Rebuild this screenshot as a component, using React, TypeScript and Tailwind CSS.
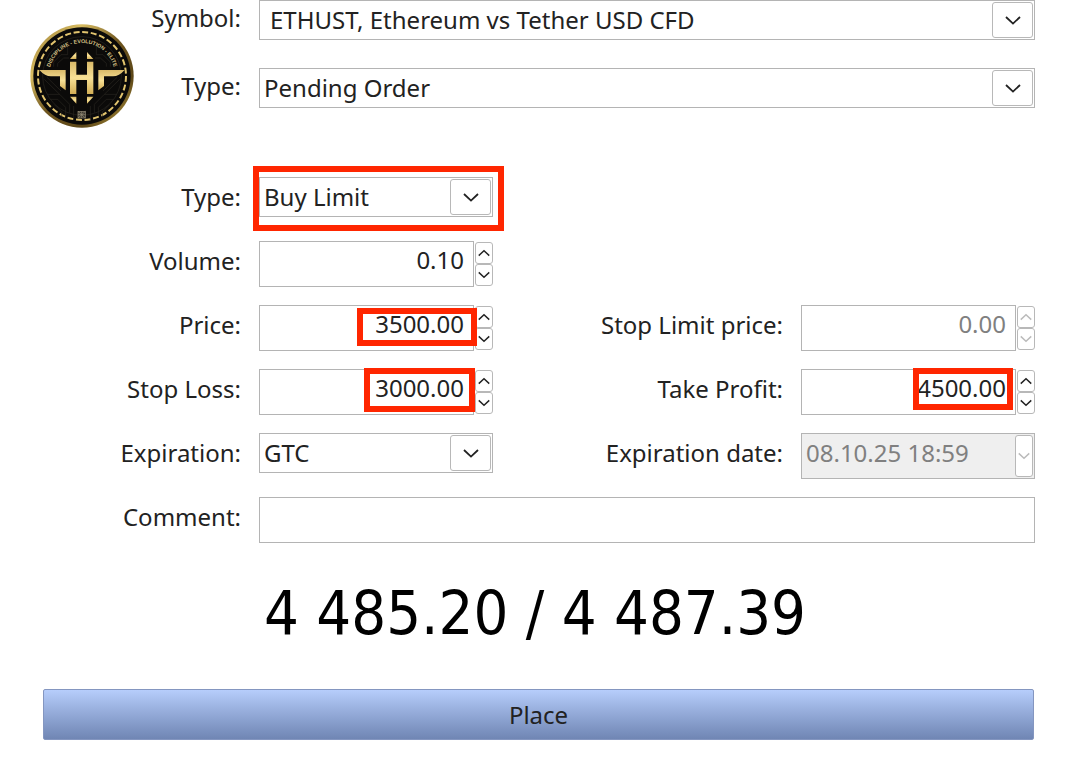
import type { ReactNode } from "react"
import { clsx } from "clsx"

function Chevron({ up, small, muted }: { up?: boolean; small?: boolean; muted?: boolean }) {
  return (
    <svg
      viewBox="0 0 16 9"
      className={clsx(small ? "w-3 h-2" : "w-4 h-[9px]", up && "rotate-180", muted ? "text-[#bbbbbb]" : "text-[#222222]")}
      fill="none"
      stroke="currentColor"
      strokeWidth={small ? 1.9 : 1.8}
      aria-hidden="true"
    >
      <path d="M1 1 L8 7.6 L15 1" />
    </svg>
  )
}

function Label({ htmlFor, compact, children }: { htmlFor: string; compact?: boolean; children: ReactNode }) {
  return (
    <label htmlFor={htmlFor} className={clsx("h-10 text-right whitespace-nowrap", compact ? "leading-9" : "leading-10")}>
      {children}
    </label>
  )
}

function SelectBox({ id, value, indent }: { id: string; value: string; indent?: boolean }) {
  return (
    <div className="relative h-10">
      <select
        id={id}
        defaultValue={value}
        className={clsx(
          "block w-full h-10 pr-12 border border-[#b4b4b4] bg-white appearance-none outline-none",
          indent ? "pl-2.5" : "pl-1",
        )}
      >
        <option>{value}</option>
      </select>
      <span className="absolute inset-y-0.5 right-0.5 w-[41px] flex items-center justify-center rounded-[3px] border border-[#b8b8b8] bg-white pointer-events-none">
        <Chevron />
      </span>
    </div>
  )
}

function SpinBox({ id, value, disabled, children }: { id: string; value: string; disabled?: boolean; children?: ReactNode }) {
  return (
    <div className="relative flex gap-px h-[46px]">
      <input
        id={id}
        type="text"
        inputMode="decimal"
        defaultValue={value}
        disabled={disabled}
        className="flex-1 min-w-0 pr-[9px] pb-2 text-right border border-[#b4b4b4] bg-white outline-none disabled:text-[#808080]"
      />
      <div className="flex flex-col w-[18px] py-px">
        <button
          type="button"
          aria-label="Increase"
          disabled={disabled}
          className="flex-1 flex items-center justify-center rounded-[3px] border border-[#b8b8b8]"
        >
          <Chevron up small muted={disabled} />
        </button>
        <button
          type="button"
          aria-label="Decrease"
          disabled={disabled}
          className="flex-1 flex items-center justify-center rounded-[3px] border border-[#b8b8b8]"
        >
          <Chevron small muted={disabled} />
        </button>
      </div>
      {children}
    </div>
  )
}

// red marker frame laid over a field
function Marker({ className }: { className: string }) {
  return <span className={clsx("absolute border-6 border-[#ff2600] pointer-events-none", className)} />
}

function Logo() {
  return (
    <svg viewBox="31 24 312 312" className="w-[104px] h-[104px] shrink-0" role="img" aria-label="Discipline Evolution Elite">
      <defs>
        <linearGradient id="rim" x1="0" y1="0" x2="1" y2="1">
          <stop offset="0" stopColor="#8d6f2c" />
          <stop offset="0.25" stopColor="#d9bd62" />
          <stop offset="0.5" stopColor="#6f5620" />
          <stop offset="0.75" stopColor="#5c4718" />
          <stop offset="1" stopColor="#c9a947" />
        </linearGradient>
        <linearGradient id="gold" x1="0" y1="0" x2="0" y2="1">
          <stop offset="0" stopColor="#d9b968" />
          <stop offset="0.5" stopColor="#f8e196" />
          <stop offset="1" stopColor="#d3ae55" />
        </linearGradient>
        <path id="motto" d="M88 180 A99 99 0 0 1 286 180" />
      </defs>
      <circle cx="187" cy="180" r="155" fill="url(#rim)" />
      <circle cx="187" cy="180" r="146" fill="#0b0a09" />
      <circle cx="187" cy="180" r="132" fill="none" stroke="#e2c46e" strokeWidth="6" strokeDasharray="18 7.9" />
      <g fill="none" stroke="#2b2721" strokeWidth="2">
        <circle cx="187" cy="180" r="118" />
        <path d="M84 235 H120 L150 265 V290 M92 250 H114 L138 274 V298 M104 266 L126 288 V304" />
        <path d="M290 235 H254 L224 265 V290 M282 250 H260 L236 274 V298 M270 266 L248 288 V304" />
        <path d="M102 152 V138 L124 116 H144 V90 M114 152 V142 L132 126 H148 M272 152 V138 L250 116 H230 V90 M260 152 V142 L242 126 H226" />
        <path d="M74 190 L120 235 M82 184 L124 225 M300 190 L254 235 M292 184 L250 225 M162 270 V312 M212 270 V312" />
      </g>
      <text fill="#d8c288" className="font-['Liberation_Sans_Narrow','Liberation_Sans',sans-serif] text-[16px] font-bold">
        <textPath href="#motto" startOffset="50%" textAnchor="middle">
          DISCIPLINE - EVOLUTION - ELITE
        </textPath>
      </text>
      <g fill="url(#gold)">
        <path d="M59 162 H138 V223 L121 210 V181 H94 Q76 181 59 162 Z" />
        <path d="M315 162 H236 V223 L253 210 V181 H280 Q298 181 315 162 Z" />
        <path d="M151 137 H170 V176 H202 V137 H221 V234 H202 V192 H170 V234 H151 Z" />
        <path d="M151 129 L170 108 V129 Z M221 129 L202 108 V129 Z" />
        <path d="M151 242 L170 263 V242 Z M221 242 L202 263 V242 Z" />
      </g>
      <g stroke="#948c78" strokeWidth="2" fill="none">
        <rect x="175" y="286" width="22" height="20" fill="#3b372e" />
        <path d="M175 296 H197 M186 286 V306 M175 286 L197 306 M197 286 L175 306" />
      </g>
    </svg>
  )
}

export default function App() {
  return (
    <form
      className="min-h-screen bg-white text-[#222222] font-['Noto_Sans',sans-serif] text-2xl leading-8"
      onSubmit={(e) => e.preventDefault()}
    >
      <div className="flex pl-[30px] pr-[35px]">
        <div className="pt-6">
          <Logo />
        </div>
        <div className="flex-1 grid grid-cols-[107px_1fr] gap-x-[18px] gap-y-7 content-start">
          <Label htmlFor="symbol" compact>
            Symbol:
          </Label>
          <SelectBox id="symbol" value="ETHUST, Ethereum vs Tether USD CFD" indent />
          <Label htmlFor="order-type" compact>
            Type:
          </Label>
          <SelectBox id="order-type" value="Pending Order" />
        </div>
      </div>

      <div className="grid grid-cols-[241px_234px_1fr_234px] auto-rows-[46px] gap-[18px] pt-[49px] pr-[35px]">
        <Label htmlFor="pending-type">Type:</Label>
        <div className="relative">
          <SelectBox id="pending-type" value="Buy Limit" />
          <Marker className="-left-1.5 -right-[11px] -top-[11px] h-[65px]" />
        </div>

        <div className="col-start-1 grid">
          <Label htmlFor="volume">Volume:</Label>
        </div>
        <SpinBox id="volume" value="0.10" />

        <div className="col-start-1 grid">
          <Label htmlFor="price">Price:</Label>
        </div>
        <SpinBox id="price" value="3500.00">
          <Marker className="right-4 top-[3px] w-[120px] h-[38px]" />
        </SpinBox>
        <Label htmlFor="stop-limit">Stop Limit price:</Label>
        <SpinBox id="stop-limit" value="0.00" disabled />

        <Label htmlFor="stop-loss">Stop Loss:</Label>
        <SpinBox id="stop-loss" value="3000.00">
          <Marker className="right-[18px] -top-px w-[111px] h-11" />
        </SpinBox>
        <Label htmlFor="take-profit">Take Profit:</Label>
        <SpinBox id="take-profit" value="4500.00">
          <Marker className="right-[22px] -top-px w-[100px] h-[42px]" />
        </SpinBox>

        <Label htmlFor="expiration">Expiration:</Label>
        <SelectBox id="expiration" value="GTC" />
        <Label htmlFor="expiration-date">Expiration date:</Label>
        <div className="relative">
          <input
            id="expiration-date"
            type="text"
            defaultValue="08.10.25 18:59"
            disabled
            className="block w-full h-[46px] pl-1 pb-2 border border-[#b4b4b4] bg-[#efefef] text-[#808080]"
          />
          <span className="absolute inset-y-0.5 right-0.5 w-[18px] flex items-center justify-center rounded-[3px] border border-[#b8b8b8] bg-white">
            <Chevron small muted />
          </span>
        </div>

        <Label htmlFor="comment">Comment:</Label>
        <input id="comment" type="text" className="col-span-3 w-full h-[46px] px-1 border border-[#b4b4b4] outline-none" />
      </div>

      <p className="pt-8 text-center font-['DejaVu_Sans_Condensed','Noto_Sans',sans-serif] text-[61px] leading-[76px] text-black">
        4 485.20 / 4 487.39
      </p>

      <div className="pt-[38px] pl-[43px] pr-9">
        <button
          type="submit"
          className="block w-full h-[51px] rounded-xs border border-[#8496c0] bg-linear-to-b from-[#b6cdfb] to-[#7086b4]"
        >
          Place
        </button>
      </div>
    </form>
  )
}
